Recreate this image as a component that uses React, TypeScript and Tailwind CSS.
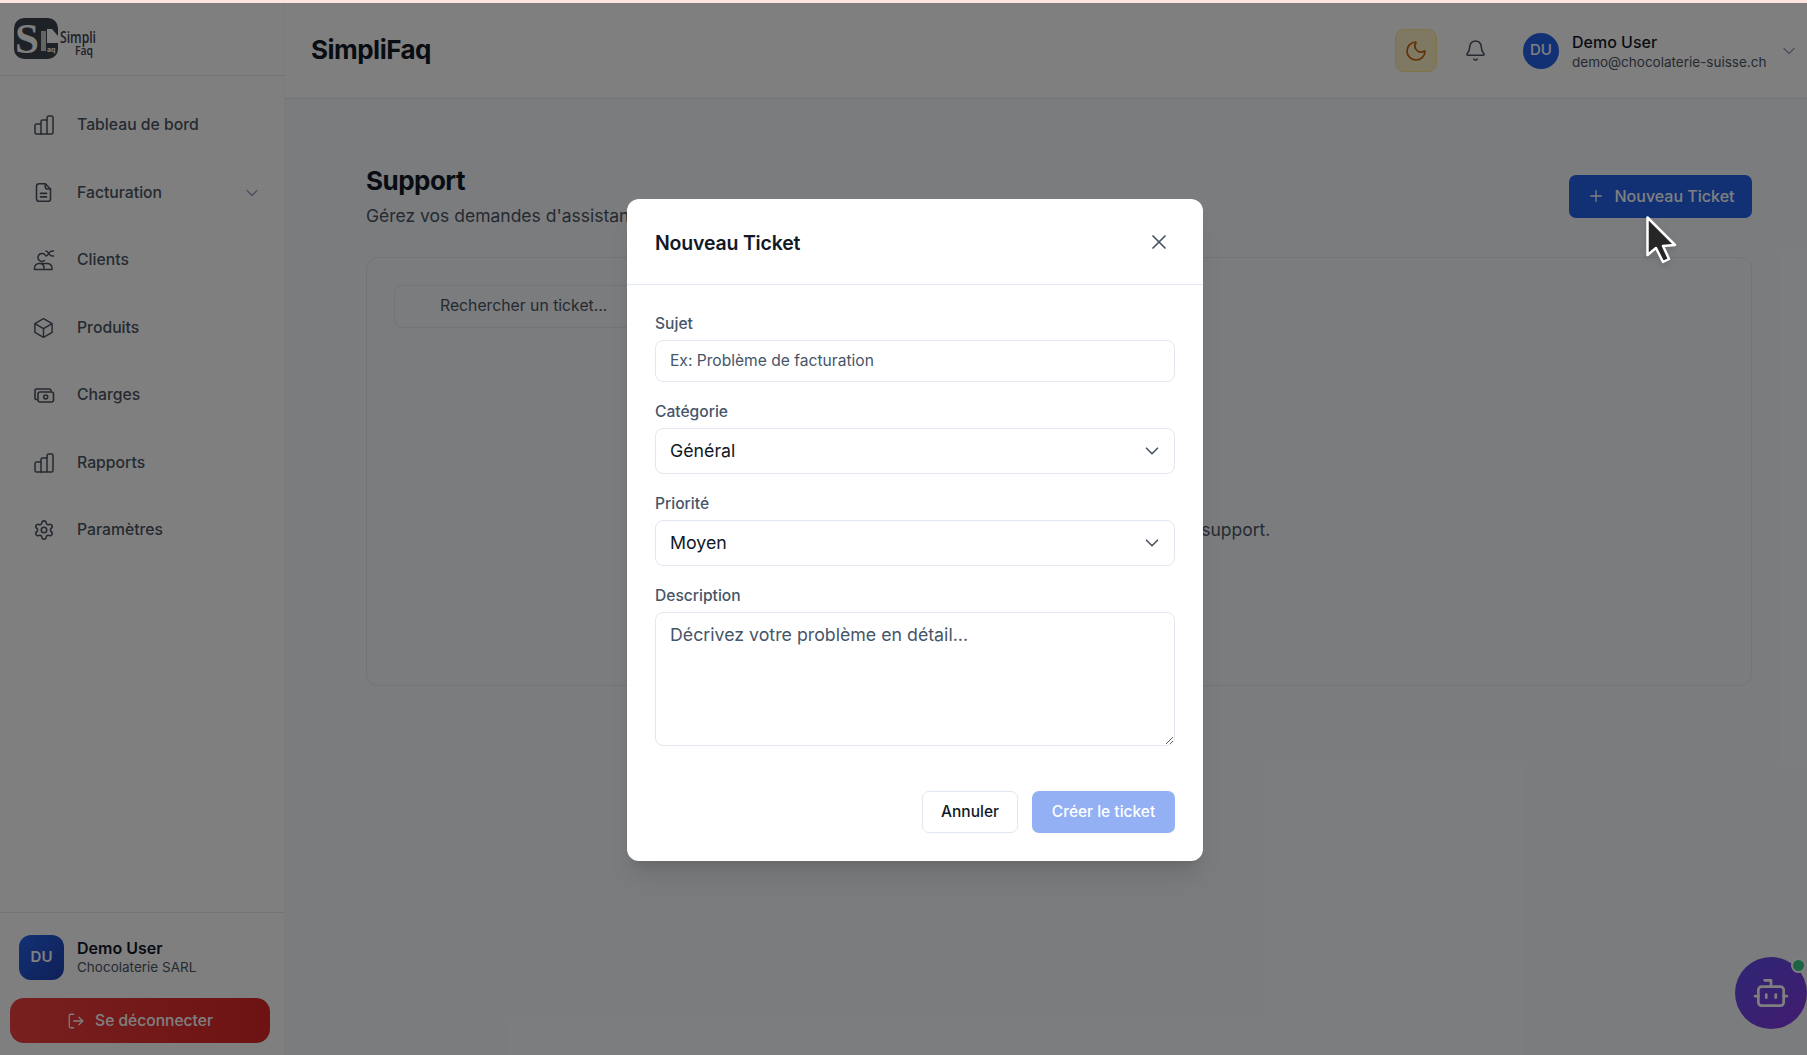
import { Bell, Bot, ChevronDown, LogOut, Moon, Plus, Settings, X } from "lucide-react";
import { HiOutlineCube } from "react-icons/hi2";
import type { ReactNode } from "react";

const BarsIcon = () => (
  <svg width="20" height="20" viewBox="0 0 20 20" fill="none" stroke="currentColor" strokeWidth="1.500" strokeLinecap="round" strokeLinejoin="round">
    <path d="M7 19H2.500A1.500 1.500 0 0 1 1 17.500v-7A1.500 1.500 0 0 1 2.500 9H7" />
    <path d="M7 19V6.500A1.500 1.500 0 0 1 8.500 5H13" />
    <path d="M7 19h10.500a1.500 1.500 0 0 0 1.500-1.500v-15A1.500 1.500 0 0 0 17.500 1h-3A1.500 1.500 0 0 0 13 2.500V19" />
  </svg>
);

const FactureIcon = () => (
  <svg width="21" height="21" viewBox="0 0 24 24" fill="none" stroke="currentColor" strokeWidth="1.800" strokeLinecap="round" strokeLinejoin="round">
    <path d="M14 2H7a3 3 0 0 0-3 3v14a3 3 0 0 0 3 3h10a3 3 0 0 0 3-3V8z" />
    <path d="M14 2v3a3 3 0 0 0 3 3h3" />
    <path d="M8.500 13h7M8.500 17h7" />
  </svg>
);

const ClientsIcon = () => (
  <svg width="22" height="22" viewBox="0 0 22 22" fill="none" stroke="currentColor" strokeWidth="1.500" strokeLinecap="round" strokeLinejoin="round">
    <path d="M1.500 20.500v-1.500a4.500 4.500 0 0 1 4.500-4.500h8a4.500 4.500 0 0 1 5 4.500v1.500z" />
    <path d="M11 20v-1.500a4 4 0 0 0-3-4" />
    <path d="M12.500 6.500a4 4 0 1 0-1 5" />
    <path d="M13 2c2.500 0 3 5 6 5M13 7c2.500 0 3-5 6-5M19 2h1.500M19 7h1.500" />
  </svg>
);

const ChargesIcon = () => (
  <svg width="22" height="22" viewBox="0 0 22 22" fill="none" stroke="currentColor" strokeWidth="1.600" strokeLinecap="round" strokeLinejoin="round">
    <path d="M4 15.500h-.5A1.500 1.500 0 0 1 2 14V6.500A1.500 1.500 0 0 1 3.500 5H16a2 2 0 0 1 2 2" />
    <rect x="5" y="8" width="15.500" height="10" rx="2" />
    <circle cx="12.700" cy="13" r="2" />
  </svg>
);

const Logo = () => (
  <svg width="90" height="46" viewBox="0 0 90 46" className="ml-[14px] overflow-visible">
    <rect x="0" y="2" width="44" height="41" rx="10" fill="#3c424c" />
    <text x="1" y="37" fontFamily="Liberation Serif, serif" fontWeight="700" fontSize="43" fill="#ffffff" textLength="24" lengthAdjust="spacingAndGlyphs">S</text>
    <rect x="27" y="15" width="5" height="20" fill="#c9c9c9" />
    <path d="M33 13h5l6 7v7H33z" fill="#ffffff" />
    <text x="33" y="36" fontFamily="Inter, sans-serif" fontWeight="700" fontSize="7" fill="#ffffff">aq</text>
    <text x="46" y="27" fontFamily="Open Sans, sans-serif" fontWeight="600" fontSize="16" fill="#3c424c" textLength="36" lengthAdjust="spacingAndGlyphs">Simpli</text>
    <text x="61" y="39" fontFamily="Open Sans, sans-serif" fontWeight="600" fontSize="13" fill="#3c424c" textLength="18" lengthAdjust="spacingAndGlyphs">Faq</text>
  </svg>
);

const NavItem = ({ icon, label, chevron }: { icon: ReactNode; label: string; chevron?: boolean }) => (
  <div className="flex h-[44px] items-center pl-[32px] pr-[22px] text-[#4b5563]">
    <span className="flex w-[23px] justify-center">{icon}</span>
    <span className="ml-[22px] flex-1 text-[15.750px] font-medium text-[#4b5563]">{label}</span>
    {chevron && <ChevronDown size={20} strokeWidth={1.500} className="text-[#94a3b8]" />}
  </div>
);

const Sidebar = () => (
  <aside className="flex w-[285px] shrink-0 flex-col border-r border-[#f1f5f9] bg-white">
    <div className="flex h-[73px] items-center border-b border-[#e2e8f0]">
      <Logo />
    </div>
    <nav className="flex flex-col gap-[23.500px] pt-[27px]">
      <NavItem icon={<BarsIcon />} label="Tableau de bord" />
      <NavItem icon={<FactureIcon />} label="Facturation" chevron />
      <NavItem icon={<ClientsIcon />} label="Clients" />
      <NavItem icon={<HiOutlineCube size={24} />} label="Produits" />
      <NavItem icon={<ChargesIcon />} label="Charges" />
      <NavItem icon={<BarsIcon />} label="Rapports" />
      <NavItem icon={<Settings size={22} strokeWidth={1.700} />} label="Paramètres" />
    </nav>
    <div className="mt-auto border-t border-[#e2e8f0] px-[10px] pb-[12px] pt-[22px]">
      <div className="flex items-center pl-[9px]">
        <div className="flex h-[45px] w-[45px] items-center justify-center rounded-[12px] bg-gradient-to-br from-[#2563eb] to-[#1e40af] text-[15px] font-semibold text-white">
          DU
        </div>
        <div className="ml-[13px] -mt-[2px]">
          <p className="text-[16px] font-semibold leading-[20px] text-[#111827]">Demo User</p>
          <p className="text-[13.500px] leading-[18px] text-[#4b5563]">Chocolaterie SARL</p>
        </div>
      </div>
      <button className="mt-[18px] flex h-[45px] w-[260px] items-center justify-center gap-[10px] rounded-[14px] bg-gradient-to-r from-[#f03e3e] to-[#dc2626] text-[15.600px] font-medium text-white">
        <LogOut size={18} strokeWidth={1.700} />
        Se déconnecter
      </button>
    </div>
  </aside>
);

const Header = () => (
  <header className="flex h-[96px] shrink-0 items-center border-b border-[#e2e8f0] bg-white pl-[26px] pr-[8px]">
    <h1 className="-mt-[2px] flex-1 text-[26px] font-bold tracking-[-0.02em] text-[#111827]">SimpliFaq</h1>
    <button className="flex h-[43px] w-[42px] items-center justify-center rounded-[9px] border border-[#fde68a] bg-[#fef3c7] text-[#c2610c]">
      <Moon size={24} strokeWidth={1.700} />
    </button>
    <Bell size={23} strokeWidth={1.600} className="ml-[27px] text-[#4b5563]" />
    <div className="ml-[36px] flex h-[36px] w-[36px] items-center justify-center rounded-full bg-[#2563eb] text-[15px] font-medium text-white">
      DU
    </div>
    <div className="ml-[13px] w-[207px] pt-[2px]">
      <p className="text-[16px] font-medium leading-[20px] text-[#111827]">Demo User</p>
      <p className="text-[13.500px] leading-[20px] text-[#4b5563]">demo@chocolaterie-suisse.ch</p>
    </div>
    <ChevronDown size={20} strokeWidth={1.500} className="text-[#94a3b8]" />
  </header>
);

const Main = () => (
  <main className="min-w-0 flex-1 bg-[#f7f9fc]">
    <Header />
    <div className="pl-[81px] pr-[55px] pt-[64px]">
      <div className="flex items-start justify-between">
        <div>
          <h2 className="text-[26px] font-bold leading-[36px] tracking-[-0.02em] text-[#111827]">Support</h2>
          <p className="mt-[5px] text-[17.500px] leading-[24px] text-[#4b5563]">Gérez vos demandes d'assistance</p>
        </div>
        <button className="mt-[12px] flex h-[43px] w-[183px] items-center justify-center gap-[10px] rounded-[7px] bg-[#2563eb] pb-[2px] text-[16px] font-medium text-white">
          <Plus size={18} strokeWidth={1.800} />
          Nouveau Ticket
        </button>
      </div>
      <section className="mt-[29px] h-[429px] rounded-[12px] border border-[#e2e8f0] px-[27px] pt-[27px]">
        <div className="flex h-[43px] w-[600px] items-center rounded-[8px] border border-[#e2e8f0] pb-[1px] pl-[45px] text-[15.750px] text-[#4b5563]">
          Rechercher un ticket...
        </div>
        <p className="mt-[190px] pr-[12px] text-center text-[17.500px] leading-[24px] text-[#4b5563]">
          Créez votre premier ticket pour contacter le support.
        </p>
      </section>
    </div>
  </main>
);

const fieldClass = "w-full rounded-[8px] border border-[#e2e8f0] bg-white px-[14px] text-[#111827] outline-none";

const Field = ({ label, children }: { label: string; children: ReactNode }) => (
  <div className="mb-[19.500px]">
    <label className="mb-[6.500px] block pt-[1px] text-[15.600px] font-medium leading-[19px] text-[#475569]">{label}</label>
    {children}
  </div>
);

const SelectBox = ({ value }: { value: string }) => (
  <div className={`${fieldClass} flex h-[46px] items-center justify-between pr-[11px] text-[17.750px]`}>
    <span className="pt-[1px]">{value}</span>
    <ChevronDown size={22} strokeWidth={1.800} className="text-[#4b5563]" />
  </div>
);

const Modal = () => (
  <div className="w-[576px] rounded-[12px] bg-white shadow-xl">
    <div className="flex h-[86px] items-center justify-between border-b border-[#e2e8f0] pl-[28px] pr-[32px]">
      <h3 className="pt-[4px] text-[19.500px] font-semibold tracking-[-0.01em] text-[#111827]">Nouveau Ticket</h3>
      <X size={24} strokeWidth={1.700} className="text-[#4b5563]" />
    </div>
    <form className="p-[28px]">
      <Field label="Sujet">
        <input placeholder="Ex: Problème de facturation" className={`${fieldClass} h-[42px] text-[15.600px] placeholder:text-[#475569]`} />
      </Field>
      <Field label="Catégorie">
        <SelectBox value="Général" />
      </Field>
      <Field label="Priorité">
        <SelectBox value="Moyen" />
      </Field>
      <Field label="Description">
        <textarea
          placeholder="Décrivez votre problème en détail..."
          className={`${fieldClass} block h-[134px] py-[9px] text-[17.750px] placeholder:text-[#475569]`}
        />
      </Field>
      <div className="mt-[45px] flex justify-end gap-[14px]">
        <button type="button" className="h-[42px] w-[96px] rounded-[7px] border border-[#e2e8f0] text-[15.500px] font-medium text-[#111827]">
          Annuler
        </button>
        <button type="button" className="h-[42px] w-[143px] rounded-[7px] bg-[#93b0f5] text-[15.500px] font-medium text-white">
          Créer le ticket
        </button>
      </div>
    </form>
  </div>
);

const ChatButton = () => (
  <div className="absolute bottom-[26px] right-0 flex h-[72px] w-[72px] items-center justify-center rounded-full bg-gradient-to-br from-[#5b4be8] to-[#8436e0] text-white">
    <Bot size={38} strokeWidth={1.700} />
    <span className="absolute right-[1px] top-[0.500px] h-[15px] w-[15px] rounded-full border-2 border-white bg-[#3bc98a]" />
  </div>
);

const Cursor = () => (
  <svg width="36" height="52" viewBox="0 0 36 52" className="absolute left-[1644px] top-[214px] drop-shadow-md">
    <path
      d="M3.500 3.500 L3.500 41 L12 34 L19 48 L25 45 L19 32 L31 31 Z"
      fill="#262626"
      stroke="#ffffff"
      strokeWidth="2.500"
      strokeLinejoin="round"
    />
  </svg>
);

export default function App() {
  return (
    <div className="relative flex h-[1055px] flex-col overflow-hidden bg-white font-[Inter,sans-serif]">
      <div className="h-[3px] shrink-0 bg-[#fde6df]" />
      <div className="relative flex min-h-0 flex-1">
        <Sidebar />
        <Main />
        <ChatButton />
        <div className="absolute inset-0 flex items-center justify-center bg-black/50 pl-[23px] pt-[2px]">
          <Modal />
        </div>
      </div>
      <Cursor />
    </div>
  );
}
